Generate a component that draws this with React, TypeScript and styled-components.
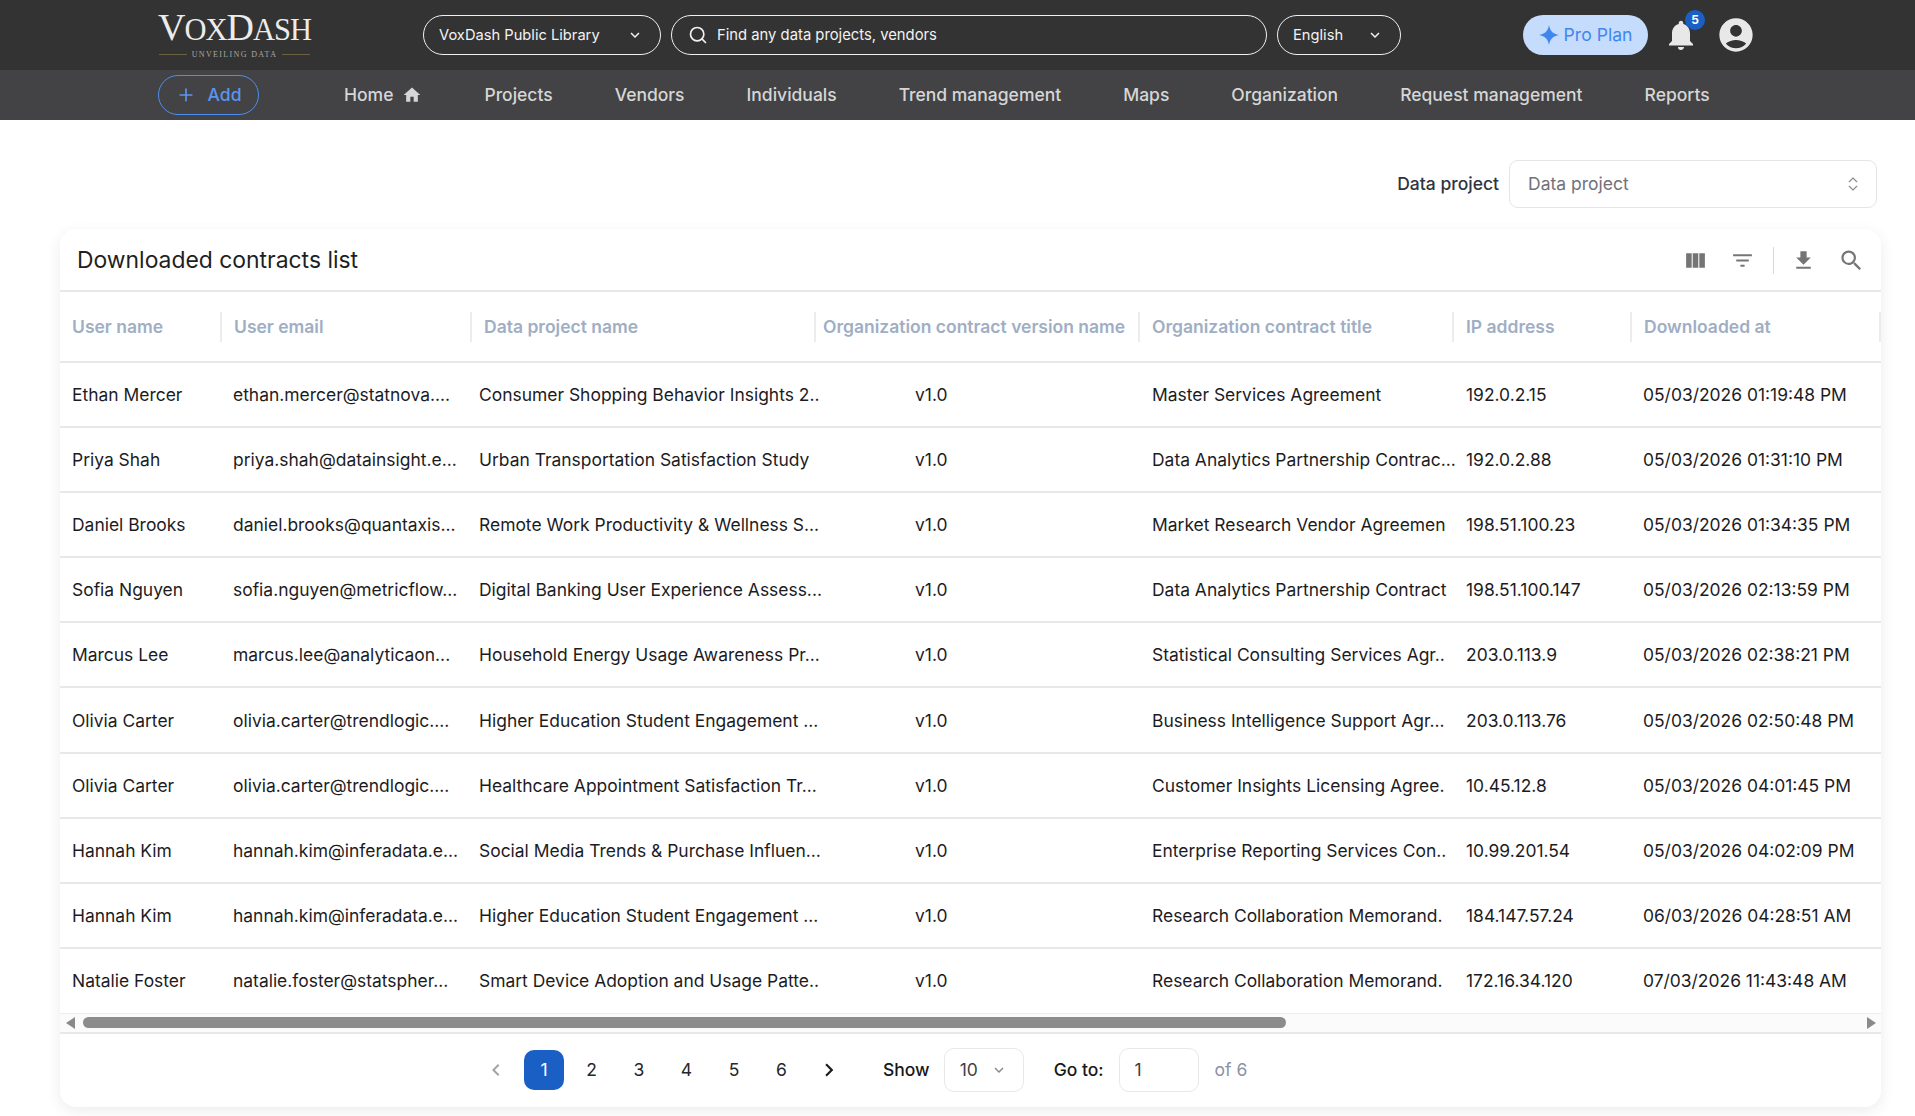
import React from 'react';
import styled, { createGlobalStyle } from 'styled-components';
import { MdViewColumn, MdFilterList, MdFileDownload, MdSearch, MdHome, MdNotifications, MdAccountCircle, MdKeyboardArrowDown, MdChevronLeft, MdChevronRight } from 'react-icons/md';
import { LuSearch, LuPlus, LuChevronsUpDown } from 'react-icons/lu';

const GlobalStyle = createGlobalStyle`
  html, body {
    margin: 0;
    padding: 0;
    background: #fff;
    font-family: Inter, "Liberation Sans", sans-serif;
    overflow: hidden;
  }
  * { box-sizing: border-box; }
`;

const Page = styled.div`
  width: 1915px;
  height: 1116px;
  display: flex;
  flex-direction: column;
`;

const TopBar = styled.header`
  height: 70px;
  background: #333333;
  display: flex;
  align-items: center;
  padding: 0 0 1px 158px;
`;

const Logo = styled.div`
  width: 265px;
  display: flex;
  flex-direction: column;
  color: #ececec;
`;

const LogoName = styled.div`
  font-family: "Liberation Serif", serif;
  font-size: 38px;
  line-height: 32px;
  letter-spacing: -1px;
  white-space: nowrap;

  small {
    font-size: 30.5px;
  }
`;

const LogoTag = styled.div`
  width: 153px;
  margin-top: 4px;
  display: flex;
  align-items: center;
  justify-content: center;
  gap: 5px;
  font-family: "Liberation Serif", serif;
  font-size: 8px;
  letter-spacing: 1.35px;
  color: #a8a8a8;
  white-space: nowrap;

  &::before, &::after {
    content: '';
    width: 28px;
    height: 1px;
    background: #6d5f42;
  }
`;

const PillSelect = styled.div<{ $w: number }>`
  width: ${({ $w }) => $w}px;
  height: 40px;
  margin-right: 10px;
  border: 1px solid #f0f0f0;
  border-radius: 20px;
  display: flex;
  align-items: center;
  justify-content: space-between;
  padding: 0 16px 0 15px;
  color: #f2f2f2;
  font-size: 14.7px;
  white-space: nowrap;
`;

const SearchBox = styled.div`
  width: 596px;
  height: 40px;
  margin-right: 10px;
  border: 1px solid #f0f0f0;
  border-radius: 20px;
  display: flex;
  align-items: center;
  gap: 9px;
  padding: 0 16px;
  color: #f2f2f2;
  font-size: 14.8px;
`;

const ProPlan = styled.div`
  width: 125px;
  height: 40px;
  margin-left: 112px;
  border-radius: 20px;
  background: #c6dcfd;
  color: #3f86ee;
  display: flex;
  align-items: center;
  justify-content: center;
  gap: 5px;
  font-size: 17.6px;
  font-weight: 400;
`;

const BellWrap = styled.div`
  position: relative;
  width: 36px;
  height: 36px;
  margin-left: 15px;
  color: #e8e8e8;
`;

const Badge = styled.span`
  position: absolute;
  top: -7px;
  right: -6px;
  width: 20px;
  height: 20px;
  border-radius: 50%;
  background: #1a5fc4;
  color: #fff;
  font-size: 12px;
  font-weight: 700;
  display: flex;
  align-items: center;
  justify-content: center;
`;

const Avatar = styled.div`
  width: 40px;
  height: 40px;
  margin-left: 17px;
  color: #e8e8e8;
`;

const NavBar = styled.nav`
  height: 50px;
  background: #434345;
  display: flex;
  align-items: center;
  padding-left: 158px;
  gap: 62px;
`;

const AddButton = styled.div`
  width: 101px;
  height: 40px;
  margin-right: 23px;
  padding-bottom: 1px;
  border: 1px solid #4c8ef0;
  border-radius: 20px;
  color: #5b95ef;
  display: flex;
  align-items: center;
  justify-content: center;
  gap: 12px;
  font-size: 17.5px;
  font-weight: 500;
`;

const NavItem = styled.div`
  display: flex;
  align-items: center;
  gap: 9px;
  padding-bottom: 1px;
  color: #d6d6d6;
  font-size: 17.5px;
  font-weight: 500;
  white-space: nowrap;
`;

const FilterRow = styled.div`
  height: 109px;
  flex-shrink: 0;
  display: flex;
  align-items: flex-start;
  justify-content: flex-end;
  gap: 10px;
  padding: 40px 38px 0 0;
`;

const FilterLabel = styled.label`
  line-height: 48px;
  font-size: 17.5px;
  font-weight: 500;
  color: #2e3440;
`;

const FilterSelect = styled.div`
  width: 368px;
  height: 48px;
  border: 1px solid #e4e4e7;
  border-radius: 9px;
  display: flex;
  align-items: center;
  justify-content: space-between;
  padding: 0 14px 1px 18px;
  color: #71717a;
  font-size: 17.5px;
`;

const Card = styled.section`
  width: 1821px;
  height: 878px;
  margin-left: 60px;
  border-radius: 16px;
  background: #fff;
  box-shadow: 0 4px 14px rgba(60, 70, 90, 0.1);
  display: flex;
  flex-direction: column;
`;

const CardHeader = styled.div`
  height: 63px;
  flex-shrink: 0;
  display: flex;
  align-items: center;
  justify-content: space-between;
  padding: 1px 16px 0 17px;
  border-bottom: 2px solid #e8e8ea;
`;

const CardTitle = styled.h2`
  margin: 0;
  font-size: 22.9px;
  font-weight: 400;
  color: #1f1f23;
`;

const Tools = styled.div`
  display: flex;
  align-items: center;
  color: #757575;
`;

const ToolButton = styled.span<{ $mr: number }>`
  display: flex;
  margin-right: ${({ $mr }) => $mr}px;
`;

const ToolSep = styled.span`
  width: 1px;
  height: 27px;
  background: #d8d8d8;
  margin-right: 17px;
`;

const Table = styled.table`
  width: 1821px;
  table-layout: fixed;
  border-collapse: collapse;
`;

const Col = styled.col<{ $w: number }>`
  width: ${({ $w }) => $w}px;
`;

const Th = styled.th`
  height: 70px;
  padding: 0;
  border-bottom: 2px solid #e8e8ea;
  text-align: left;
  font-size: 17.5px;
  font-weight: 600;
  color: #a0aec4;
  white-space: nowrap;
`;

const ThLabel = styled.div`
  height: 30px;
  display: flex;
  align-items: center;
  padding-left: 12px;
  border-left: 2px solid #ececee;

  ${Th}:first-child & {
    border-left: none;
    padding-left: 12px;
  }
  ${Th}:nth-child(4) & {
    padding-left: 7px;
  }
  ${Th}:last-child & {
    border-right: 2px solid #ececee;
  }
`;

const Td = styled.td`
  height: 65.1px;
  padding: 0 0 0 13px;
  border-bottom: 2px solid #e8e8ea;
  font-size: 17.45px;
  color: #1c1c1f;
  white-space: nowrap;

  &:first-child { padding-left: 12px; }
  &:nth-child(3) { padding-left: 9px; }
  &:nth-child(4) { padding-left: 101px; }
  &:nth-child(5), &:nth-child(6) { padding-left: 14px; }

  tr:last-child & {
    height: 65px;
    border-bottom: none;
  }
`;

const ScrollBar = styled.div`
  height: 21px;
  flex-shrink: 0;
  display: flex;
  align-items: center;
  justify-content: space-between;
  padding: 0 5px 0 6px;
  background: #fbfbfb;
  border-top: 1px solid #eeeeee;
  border-bottom: 2px solid #e8e8ea;
`;

const ScrollArrow = styled.span<{ $right?: boolean }>`
  width: 0;
  height: 0;
  border-top: 6px solid transparent;
  border-bottom: 6px solid transparent;
  ${({ $right }) => ($right ? 'border-left: 9px solid #8a8a8a;' : 'border-right: 9px solid #8a8a8a;')}
`;

const ScrollThumb = styled.div`
  width: 1203px;
  height: 11px;
  margin-left: 8px;
  margin-right: auto;
  border-radius: 6px;
  background: #8c8c8c;
`;

const Footer = styled.div`
  flex: 1;
  display: flex;
  align-items: center;
  padding: 0 0 1px 416px;
`;

const PageArrow = styled.button<{ $muted?: boolean }>`
  width: 40px;
  height: 40px;
  padding: 0;
  margin-left: ${({ $muted }) => ($muted ? '0' : '7.5px')};
  border: none;
  background: none;
  display: flex;
  align-items: center;
  justify-content: center;
  color: ${({ $muted }) => ($muted ? '#a3a3a3' : '#1c1c1f')};
`;

const PageButton = styled.button<{ $active?: boolean }>`
  width: 40px;
  height: 40px;
  padding: 0;
  margin-left: ${({ $active }) => ($active ? '8px' : '7.5px')};
  border: none;
  border-radius: 10px;
  font-family: inherit;
  font-size: 17.5px;
  background: ${({ $active }) => ($active ? '#1a5fc4' : 'transparent')};
  color: ${({ $active }) => ($active ? '#fff' : '#27272a')};
`;

const PagerLabel = styled.span<{ $ml: number }>`
  margin-left: ${({ $ml }) => $ml}px;
  font-size: 17.5px;
  font-weight: 500;
  color: #18181b;
`;

const PagerBox = styled.div<{ $ml: number }>`
  width: 80px;
  height: 44px;
  margin-left: ${({ $ml }) => $ml}px;
  border: 1px solid #e8e8ec;
  border-radius: 10px;
  display: flex;
  align-items: center;
  justify-content: space-between;
  padding: 0 15px;
  font-size: 17.5px;
  color: #3f3f46;
`;

const PagerTotal = styled.span`
  margin-left: 16px;
  font-size: 17.5px;
  color: #8a94a6;
`;

const columns = [160, 250, 344, 324, 314, 178, 251];
const heads = ['User name', 'User email', 'Data project name', 'Organization contract version name', 'Organization contract title', 'IP address', 'Downloaded at'];

const rows = [
  ['Ethan Mercer', 'ethan.mercer@statnova....', 'Consumer Shopping Behavior Insights 2..', 'Master Services Agreement', '192.0.2.15', '05/03/2026 01:19:48 PM'],
  ['Priya Shah', 'priya.shah@datainsight.e...', 'Urban Transportation Satisfaction Study', 'Data Analytics Partnership Contrac...', '192.0.2.88', '05/03/2026 01:31:10 PM'],
  ['Daniel Brooks', 'daniel.brooks@quantaxis...', 'Remote Work Productivity & Wellness S...', 'Market Research Vendor Agreemen', '198.51.100.23', '05/03/2026 01:34:35 PM'],
  ['Sofia Nguyen', 'sofia.nguyen@metricflow...', 'Digital Banking User Experience Assess...', 'Data Analytics Partnership Contract', '198.51.100.147', '05/03/2026 02:13:59 PM'],
  ['Marcus Lee', 'marcus.lee@analyticaon...', 'Household Energy Usage Awareness Pr...', 'Statistical Consulting Services Agr..', '203.0.113.9', '05/03/2026 02:38:21 PM'],
  ['Olivia Carter', 'olivia.carter@trendlogic....', 'Higher Education Student Engagement ...', 'Business Intelligence Support Agr...', '203.0.113.76', '05/03/2026 02:50:48 PM'],
  ['Olivia Carter', 'olivia.carter@trendlogic....', 'Healthcare Appointment Satisfaction Tr...', 'Customer Insights Licensing Agree.', '10.45.12.8', '05/03/2026 04:01:45 PM'],
  ['Hannah Kim', 'hannah.kim@inferadata.e...', 'Social Media Trends & Purchase Influen...', 'Enterprise Reporting Services Con..', '10.99.201.54', '05/03/2026 04:02:09 PM'],
  ['Hannah Kim', 'hannah.kim@inferadata.e...', 'Higher Education Student Engagement ...', 'Research Collaboration Memorand.', '184.147.57.24', '06/03/2026 04:28:51 AM'],
  ['Natalie Foster', 'natalie.foster@statspher...', 'Smart Device Adoption and Usage Patte..', 'Research Collaboration Memorand.', '172.16.34.120', '07/03/2026 11:43:48 AM'],
];

const navItems = ['Projects', 'Vendors', 'Individuals', 'Trend management', 'Maps', 'Organization', 'Request management', 'Reports'];

const Spark = () => (
  <svg width="20" height="20" viewBox="0 0 20 20" fill="currentColor">
    <path d="M10 0 C11 6 14 9 20 10 C14 11 11 14 10 20 C9 14 6 11 0 10 C6 9 9 6 10 0 Z" />
  </svg>
);

const App: React.FC = () => {
  return (
    <Page>
      <GlobalStyle />
      <TopBar>
        <Logo>
          <LogoName>V<small>OX</small>D<small>ASH</small></LogoName>
          <LogoTag>UNVEILING DATA</LogoTag>
        </Logo>
        <PillSelect $w={238}>
          VoxDash Public Library
          <MdKeyboardArrowDown size={18} />
        </PillSelect>
        <SearchBox>
          <LuSearch size={20} />
          Find any data projects, vendors
        </SearchBox>
        <PillSelect $w={124}>
          English
          <MdKeyboardArrowDown size={18} />
        </PillSelect>
        <ProPlan>
          <Spark />
          Pro Plan
        </ProPlan>
        <BellWrap>
          <MdNotifications size={36} />
          <Badge>5</Badge>
        </BellWrap>
        <Avatar>
          <MdAccountCircle size={40} />
        </Avatar>
      </TopBar>
      <NavBar>
        <AddButton>
          <LuPlus size={20} />
          Add
        </AddButton>
        <NavItem>
          Home
          <MdHome size={20} />
        </NavItem>
        {navItems.map((item) => (
          <NavItem key={item}>{item}</NavItem>
        ))}
      </NavBar>
      <FilterRow>
        <FilterLabel>Data project</FilterLabel>
        <FilterSelect>
          Data project
          <LuChevronsUpDown size={18} color="#8a8a92" strokeWidth={1.5} />
        </FilterSelect>
      </FilterRow>
      <Card>
        <CardHeader>
          <CardTitle>Downloaded contracts list</CardTitle>
          <Tools>
            <ToolButton $mr={22}><MdViewColumn size={25} /></ToolButton>
            <ToolButton $mr={18}><MdFilterList size={25} /></ToolButton>
            <ToolSep />
            <ToolButton $mr={22}><MdFileDownload size={25} /></ToolButton>
            <ToolButton $mr={0}><MdSearch size={27} /></ToolButton>
          </Tools>
        </CardHeader>
        <Table>
          <colgroup>
            {columns.map((w, i) => (
              <Col key={i} $w={w} />
            ))}
          </colgroup>
          <thead>
            <tr>
              {heads.map((h) => (
                <Th key={h}>
                  <ThLabel>{h}</ThLabel>
                </Th>
              ))}
            </tr>
          </thead>
          <tbody>
            {rows.map((r, i) => (
              <tr key={i}>
                <Td>{r[0]}</Td>
                <Td>{r[1]}</Td>
                <Td>{r[2]}</Td>
                <Td>v1.0</Td>
                <Td>{r[3]}</Td>
                <Td>{r[4]}</Td>
                <Td>{r[5]}</Td>
              </tr>
            ))}
          </tbody>
        </Table>
        <ScrollBar>
          <ScrollArrow />
          <ScrollThumb />
          <ScrollArrow $right />
        </ScrollBar>
        <Footer>
          <PageArrow $muted><MdChevronLeft size={24} /></PageArrow>
          {[1, 2, 3, 4, 5, 6].map((n) => (
            <PageButton key={n} $active={n === 1}>{n}</PageButton>
          ))}
          <PageArrow><MdChevronRight size={26} /></PageArrow>
          <PagerLabel $ml={34}>Show</PagerLabel>
          <PagerBox $ml={14}>
            10
            <MdKeyboardArrowDown size={18} color="#8a8a92" />
          </PagerBox>
          <PagerLabel $ml={30}>Go to:</PagerLabel>
          <PagerBox $ml={15}>1</PagerBox>
          <PagerTotal>of 6</PagerTotal>
        </Footer>
      </Card>
    </Page>
  );
};

export default App;
